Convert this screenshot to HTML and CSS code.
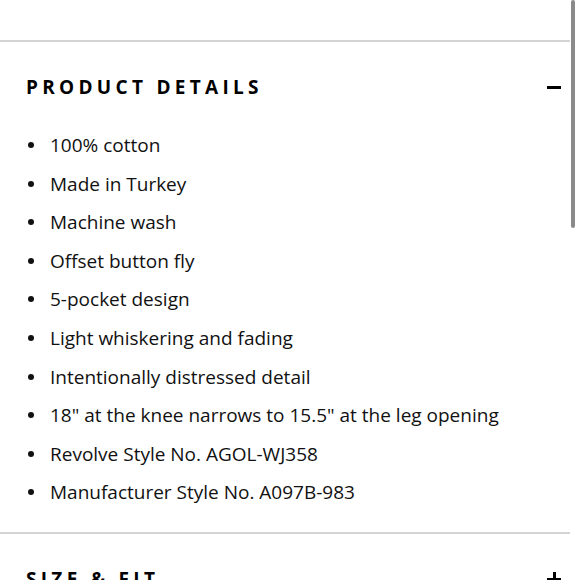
FILE: index.html
```html
<!DOCTYPE html>
<html>
<head>
<meta charset="utf-8">
<link rel="stylesheet" href="styles.css">
</head>
<body>
<div class="page">
  <section class="acc acc-top"></section>
  <section class="acc">
    <div class="acc-head">
      <h2 class="acc-title">PRODUCT DETAILS</h2>
      <span class="acc-icon minus"></span>
    </div>
    <ul class="details">
      <li>100% cotton</li>
      <li>Made in Turkey</li>
      <li>Machine wash</li>
      <li>Offset button fly</li>
      <li>5-pocket design</li>
      <li>Light whiskering and fading</li>
      <li>Intentionally distressed detail</li>
      <li>18" at the knee narrows to 15.5" at the leg opening</li>
      <li>Revolve Style No. AGOL-WJ358</li>
      <li>Manufacturer Style No. A097B-983</li>
    </ul>
  </section>
  <section class="acc">
    <div class="acc-head">
      <h2 class="acc-title">SIZE &amp; FIT</h2>
      <span class="acc-icon plus"></span>
    </div>
  </section>
</div>
<div class="scroll-thumb"></div>
</body>
</html>
```
FILE: styles.css
```css
html, body {
  margin: 0;
  padding: 0;
  background: #fff;
  overflow: hidden;
}
body {
  font-family: "Open Sans", "Liberation Sans", sans-serif;
  color: #111;
  width: 580px;
  height: 580px;
}
.page {
  width: 570px;
}
.acc-top {
  height: 40px;
  border-bottom: 2px solid #d4d4d4;
}
.acc {
  border-bottom: 2px solid #d4d4d4;
}
.acc-head {
  display: flex;
  align-items: center;
  justify-content: space-between;
  padding: 33px 9px 0 26px;
}
.acc-title {
  margin: 0;
  font-size: 19px;
  line-height: 24px;
  font-weight: 700;
  letter-spacing: 4.3px;
  color: #000;
}
.acc-icon {
  position: relative;
  width: 14px;
  height: 14px;
}
.acc-icon::before {
  content: "";
  position: absolute;
  left: 0;
  top: 6px;
  width: 14px;
  height: 2.5px;
  background: #000;
}
.plus::after {
  content: "";
  position: absolute;
  left: 6px;
  top: 0;
  width: 2.5px;
  height: 14px;
  background: #000;
}
.details {
  list-style: none;
  margin: 0;
  padding: 26.7px 0 20px 26px;
  display: flex;
  flex-direction: column;
}
.details li {
  display: flex;
  align-items: center;
  height: 38.6px;
  font-size: 19px;
  color: #111;
}
.details li::before {
  content: "";
  width: 6px;
  height: 6px;
  border-radius: 50%;
  background: #111;
  margin: 0 16px 0 2px;
  flex: none;
}
.scroll-thumb {
  position: fixed;
  right: 5px;
  top: 0;
  width: 4px;
  height: 228px;
  border-radius: 2px;
  background: #8a8a8a;
}
```
